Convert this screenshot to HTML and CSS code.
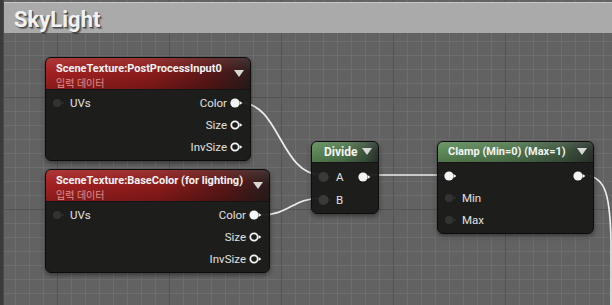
FILE: index.html
```html
<!DOCTYPE html>
<html lang="ko">
<head>
  <meta charset="UTF-8">
  <title>SkyLight</title>
  <link rel="stylesheet" href="styles.css">
</head>
<body>
  <div class="frame">
    <div class="edge"></div>
    <div class="graph">
      <div class="titlebar">SkyLight</div>

      <!-- wires, in page coordinates -->
      <svg class="wires" viewBox="4 0 608 305" width="608" height="305">
        <path d="M241 103 C 280 103, 280 175, 322 175"/>
        <path d="M261 215 C 290 215, 292 198, 322 198"/>
        <path d="M367 175 L 448 175"/>
        <path d="M582 175 C 604 175, 610 190, 611 240 L 611 305"/>
      </svg>

      <div class="node red node-pp">
        <div class="node-head">
          <div class="node-title">SceneTexture:PostProcessInput0</div>
          <div class="node-sub">입력 데이터</div>
          <span class="drop"></span>
        </div>
        <div class="node-body">
          <div class="row">
            <div class="pin-in"><svg class="pin dim" viewBox="0 0 14 12"><circle cx="5" cy="6" r="4"/><path d="M9.6 4.3 L12 6 L9.6 7.7Z"/></svg>UVs</div>
            <div class="pin-out">Color<svg class="pin full" viewBox="0 0 14 12"><circle cx="5" cy="6" r="4.6"/><path d="M9.6 4 L12.4 6 L9.6 8Z"/></svg></div>
          </div>
          <div class="row">
            <div class="pin-out">Size<svg class="pin ring" viewBox="0 0 14 12"><circle cx="5" cy="6" r="3.7"/><path d="M9.6 4 L12.4 6 L9.6 8Z"/></svg></div>
          </div>
          <div class="row">
            <div class="pin-out">InvSize<svg class="pin ring" viewBox="0 0 14 12"><circle cx="5" cy="6" r="3.7"/><path d="M9.6 4 L12.4 6 L9.6 8Z"/></svg></div>
          </div>
        </div>
      </div>

      <div class="node red node-bc">
        <div class="node-head">
          <div class="node-title">SceneTexture:BaseColor (for lighting)</div>
          <div class="node-sub">입력 데이터</div>
          <span class="drop"></span>
        </div>
        <div class="node-body">
          <div class="row">
            <div class="pin-in"><svg class="pin dim" viewBox="0 0 14 12"><circle cx="5" cy="6" r="4"/><path d="M9.6 4.3 L12 6 L9.6 7.7Z"/></svg>UVs</div>
            <div class="pin-out">Color<svg class="pin full" viewBox="0 0 14 12"><circle cx="5" cy="6" r="4.6"/><path d="M9.6 4 L12.4 6 L9.6 8Z"/></svg></div>
          </div>
          <div class="row">
            <div class="pin-out">Size<svg class="pin ring" viewBox="0 0 14 12"><circle cx="5" cy="6" r="3.7"/><path d="M9.6 4 L12.4 6 L9.6 8Z"/></svg></div>
          </div>
          <div class="row">
            <div class="pin-out">InvSize<svg class="pin ring" viewBox="0 0 14 12"><circle cx="5" cy="6" r="3.7"/><path d="M9.6 4 L12.4 6 L9.6 8Z"/></svg></div>
          </div>
        </div>
      </div>

      <div class="node green node-div">
        <div class="node-head short">
          <div class="node-title big">Divide</div>
          <span class="drop"></span>
        </div>
        <div class="node-body tall">
          <div class="row">
            <div class="pin-in"><svg class="pin big" viewBox="0 0 14 12"><circle cx="5.5" cy="6" r="5"/><path d="M10.4 4.6 L12.4 6 L10.4 7.4Z"/></svg>A</div>
            <div class="pin-out"><svg class="pin full" viewBox="0 0 14 12"><circle cx="5" cy="6" r="4.6"/><path d="M9.6 4 L12.4 6 L9.6 8Z"/></svg></div>
          </div>
          <div class="row">
            <div class="pin-in"><svg class="pin big" viewBox="0 0 14 12"><circle cx="5.5" cy="6" r="5"/><path d="M10.4 4.6 L12.4 6 L10.4 7.4Z"/></svg>B</div>
          </div>
        </div>
      </div>

      <div class="node green node-clamp">
        <div class="node-head short">
          <div class="node-title">Clamp (Min=0) (Max=1)</div>
          <span class="drop"></span>
        </div>
        <div class="node-body">
          <div class="row">
            <div class="pin-in"><svg class="pin full" viewBox="0 0 14 12"><circle cx="5" cy="6" r="4.6"/><path d="M9.6 4 L12.4 6 L9.6 8Z"/></svg></div>
            <div class="pin-out"><svg class="pin full" viewBox="0 0 14 12"><circle cx="5" cy="6" r="4.6"/><path d="M9.6 4 L12.4 6 L9.6 8Z"/></svg></div>
          </div>
          <div class="row">
            <div class="pin-in"><svg class="pin dim" viewBox="0 0 14 12"><circle cx="5" cy="6" r="4"/><path d="M9.6 4.3 L12 6 L9.6 7.7Z"/></svg>Min</div>
          </div>
          <div class="row">
            <div class="pin-in"><svg class="pin dim" viewBox="0 0 14 12"><circle cx="5" cy="6" r="4"/><path d="M9.6 4.3 L12 6 L9.6 7.7Z"/></svg>Max</div>
          </div>
        </div>
      </div>
    </div>
  </div>
</body>
</html>
```

FILE: styles.css
```css
body {
  margin: 0;
  width: 612px;
  height: 305px;
  overflow: hidden;
  font-family: Roboto, "Noto Sans CJK KR", sans-serif;
  background-color: #616161;
}
.frame {
  display: flex;
  height: 305px;
}
.edge {
  width: 3px;
  background-color: #3b3b3b;
  border-right: 1px solid #4b4b4b;
}
.graph {
  position: relative;
  flex: 1;
  padding-top: 2px;
  background-color: #626262;
  background-image:
    linear-gradient(to right, #545454 1px, transparent 1px),
    linear-gradient(to bottom, #545454 1px, transparent 1px),
    linear-gradient(to right, #6d6d6d 1px, transparent 1px),
    linear-gradient(to bottom, #6d6d6d 1px, transparent 1px);
  background-size: 112px 112px, 112px 112px, 14px 14px, 14px 14px;
  background-position: 53px 0, 0 97px, 11px 0, 0 13px;
}
.titlebar {
  height: 30px;
  border-top: 1px solid #c9c9c9;
  background-color: #aaaaaa;
  color: #f2f2f2;
  font-weight: bold;
  font-size: 22px;
  line-height: 33px;
  padding-left: 10px;
  text-shadow: 1px 1px 0 #4a4a4a, 2px 2px 1px rgba(0, 0, 0, 0.35);
}
.wires {
  position: absolute;
  left: 0;
  top: 0;
}
.wires path {
  fill: none;
  stroke: #ececec;
  stroke-width: 1.7;
}

/* nodes */
.node {
  position: absolute;
  border: 1px solid #0c0c0c;
  border-radius: 6px;
  background-color: rgba(24, 25, 23, 0.94);
  box-shadow: 0 2px 5px rgba(0, 0, 0, 0.45);
  overflow: hidden;
}
.node-pp { left: 41px; top: 57px; width: 204px; }
.node-bc { left: 41px; top: 169px; width: 223px; }
.node-div { left: 307px; top: 141px; width: 66px; }
.node-clamp { left: 433px; top: 141px; width: 155px; }

.node-head {
  position: relative;
  height: 32px;
  padding: 4px 24px 0 10px;
  box-sizing: border-box;
  border-bottom: 1px solid #141414;
}
.node-head.short {
  height: 21px;
  padding-top: 3px;
}
.red .node-head {
  background:
    linear-gradient(to bottom, rgba(255, 255, 255, 0.1), rgba(0, 0, 0, 0) 45%, rgba(0, 0, 0, 0.18)),
    linear-gradient(to right, #a42121 0%, #8e1b1b 50%, #5a1717 80%, #2c1d1d 100%);
}
.green .node-head {
  background:
    linear-gradient(to bottom, rgba(255, 255, 255, 0.1), rgba(0, 0, 0, 0) 45%, rgba(0, 0, 0, 0.15)),
    linear-gradient(to right, #5e8a59 0%, #527a4f 45%, #3e5640 80%, #2d352e 100%);
}
.node-title {
  color: #f3f3f3;
  font-size: 11px;
  font-weight: bold;
  line-height: 14px;
  white-space: nowrap;
}
.node-title.big {
  font-size: 12px;
  padding-left: 2px;
}
.node-sub {
  color: #df8f88;
  font-size: 10px;
  line-height: 15px;
}
.drop {
  position: absolute;
  right: 6px;
  top: 12px;
  border-left: 5px solid transparent;
  border-right: 5px solid transparent;
  border-top: 7px solid #d8d8d8;
}
.short .drop {
  top: 6px;
}
.node-body {
  padding: 2px 0 2px;
}
.node-body.tall .row {
  height: 23px;
}
.row {
  height: 22px;
  display: flex;
  align-items: center;
  justify-content: space-between;
  padding: 0 6px 0 6px;
  color: #e0e0e0;
  font-size: 11.5px;
}
.pin-in,
.pin-out {
  display: flex;
  align-items: center;
  gap: 4px;
}
.pin-out {
  margin-left: auto;
  gap: 3px;
}
.pin {
  width: 14px;
  height: 12px;
}
.pin.dim circle,
.pin.dim path {
  fill: #333432;
}
.pin.big circle {
  fill: #3a3b39;
}
.pin.big path {
  fill: #2f302e;
}
.pin.full circle,
.pin.full path {
  fill: #f4f4f4;
}
.pin.ring circle {
  fill: none;
  stroke: #f4f4f4;
  stroke-width: 1.8;
}
.pin.ring path {
  fill: #f4f4f4;
}
```
